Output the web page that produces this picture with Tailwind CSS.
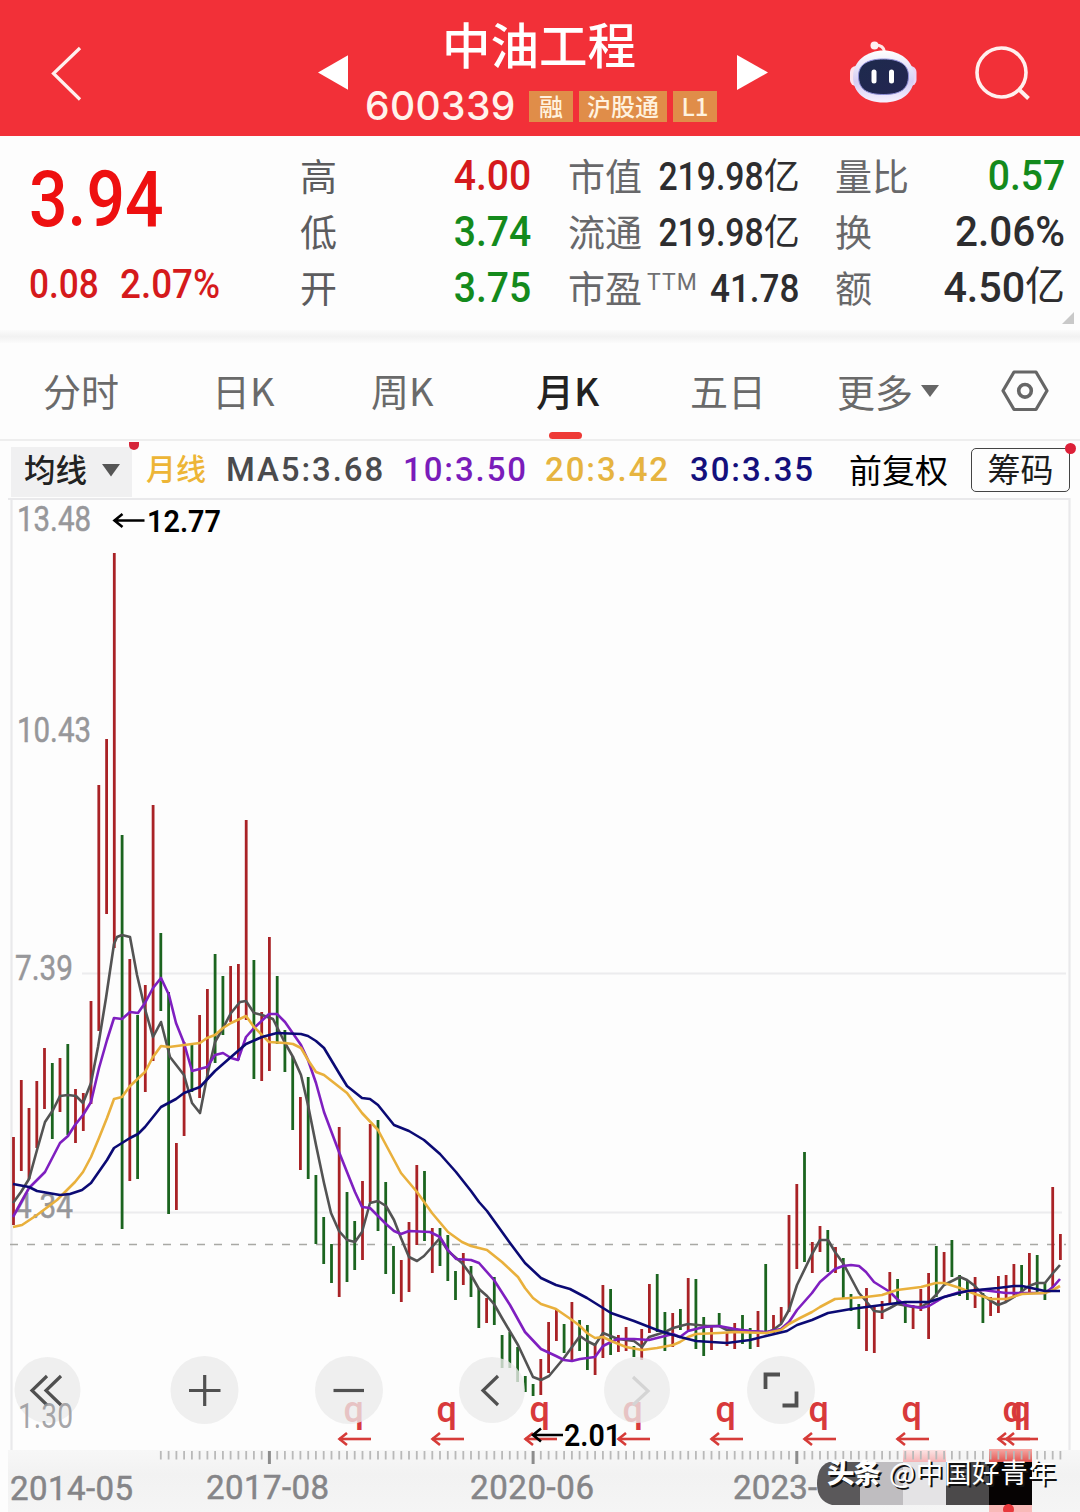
<!DOCTYPE html>
<html lang="zh-CN">
<head>
<meta charset="utf-8">
<title>中油工程 600339</title>
<script src="https://cdn.jsdelivr.net/npm/@tailwindcss/browser@4"></script>
</head>
<body class="w-[1080px] h-[1512px] overflow-hidden bg-[#fdfdfd] font-[Roboto,'Noto_Sans_CJK_SC',sans-serif]">

<!-- Title bar -->
<header class="flex h-[136px] bg-[#f23038] text-white">
  <svg class="w-[318px] h-[136px] shrink-0" viewBox="0 0 318 136" fill="none" stroke="#fff0ee" stroke-width="3.2"><path d="M80 48 53.500 73.500 80 99.500"/></svg>
  <svg class="w-[30px] h-[136px] shrink-0" viewBox="0 0 30 136" fill="#fff"><path d="M0 72.500 30.500 55v35z"/></svg>
  <div class="w-[389px] shrink-0 flex flex-col">
    <div class="h-[86px] pt-[9px] pl-[94px] leading-[68px] text-[48.500px] font-medium whitespace-nowrap font-['Noto_Sans_CJK_SC',sans-serif]">中油工程</div>
    <div class="flex items-center h-[40px] pl-[17px] text-[#fff3ec]">
      <span class="w-[164px] text-[39px] leading-[40px] font-[Inter,sans-serif] font-medium tracking-[0.400px]">600339</span>
      <span class="flex gap-[6px] font-['Noto_Sans_CJK_SC',sans-serif] font-medium text-[24px] leading-[29px] text-[#fff2df]">
        <span class="w-[44px] h-[31px] bg-[#e08d49] text-center">融</span>
        <span class="w-[88px] h-[31px] bg-[#e08d49] text-center">沪股通</span>
        <span class="w-[44px] h-[31px] bg-[#e08d49] text-center">L1</span>
      </span>
    </div>
  </div>
  <svg class="w-[31px] h-[136px] shrink-0" viewBox="0 0 31 136" fill="#fff"><path d="M0 55 31 72.500 0 90z"/></svg>
  <svg class="w-[312px] h-[136px] shrink-0" viewBox="768 0 312 136" fill="none">
    <defs>
      <linearGradient id="head" x1="0" y1="0" x2="0" y2="1"><stop offset="0" stop-color="#fff"/><stop offset=".6" stop-color="#d6cdf3"/><stop offset="1" stop-color="#f7f1ff"/></linearGradient>
      <linearGradient id="face" x1="0" y1="0" x2="1" y2="1"><stop offset="0" stop-color="#1d2a4c"/><stop offset="1" stop-color="#242552"/></linearGradient>
    </defs>
    <path d="M875 45c6 0 9 2 9.500 7" stroke="#ffe6e6" stroke-width="3"/>
    <circle cx="874.500" cy="45.500" r="4" fill="#fff0f2"/>
    <rect x="850" y="66" width="12" height="20" rx="6" fill="#fbe4ee"/><rect x="904.500" y="66" width="12" height="20" rx="6" fill="#e9d4f4"/>
    <path d="M883.500 50.500C900 50.500 914 61 914 77c0 16-12 25.500-30.500 25.500S853 93 853 77c0-16 14-26.500 30.500-26.500z" fill="url(#head)"/>
    <path d="M883.500 59c15 0 25 5 25 17 0 13-8 18.500-25 18.500s-25-5.500-25-18.500c0-12 10-17 25-17z" fill="url(#face)" stroke="#8f8fd8" stroke-width="1"/>
    <rect x="871.500" y="69.500" width="5" height="14" rx="2.500" fill="#fff"/><rect x="889" y="69.500" width="5" height="14" rx="2.500" fill="#fff"/>
    <circle cx="1001.500" cy="72.500" r="24.500" stroke="#fff0ee" stroke-width="3.600"/><path d="M1018.500 89 1028.500 98.500" stroke="#fff0ee" stroke-width="4"/>
  </svg>
</header>

<!-- Quote summary -->
<section class="relative flex h-[194px] pt-[11px] text-[43px] leading-[56px] font-medium text-[#2d2d2f] whitespace-nowrap">
  <div class="w-[300px] pl-[29px] shrink-0 text-[#d51a1c]">
    <div class="pt-[1px] h-[110px] leading-[104px] text-[78px] text-[#ee1010] origin-left scale-x-[.87]">3.94</div>
    <div class="flex text-[40px] leading-[56px]"><span class="w-[91px] origin-left scale-x-[.88]">0.08</span><span class="origin-left scale-x-[.92]">2.07%</span></div>
  </div>
  <div class="w-[231px] shrink-0">
    <div class="h-[56px] flex justify-between"><span class="pt-[4px] text-[37px] font-normal text-[#5c5c5e]">高</span><span class="origin-right scale-x-[.91] text-[#d51a1c]">4.00</span></div>
    <div class="h-[56px] flex justify-between"><span class="pt-[4px] text-[37px] font-normal text-[#5c5c5e]">低</span><span class="origin-right scale-x-[.91] text-[#148a1c]">3.74</span></div>
    <div class="h-[56px] flex justify-between"><span class="pt-[4px] text-[37px] font-normal text-[#5c5c5e]">开</span><span class="origin-right scale-x-[.91] text-[#148a1c]">3.75</span></div>
  </div>
  <div class="w-[231px] ml-[37px] shrink-0 text-[39px]">
    <div class="h-[56px] flex"><span class="w-[74px] pt-[4px] text-[37px] font-normal text-[#68686a]">市值</span><span class="flex-1 flex justify-end pt-[2px]"><span class="origin-right scale-x-[.865]">219.98</span><span class="text-[36px] font-normal">亿</span></span></div>
    <div class="h-[56px] flex"><span class="w-[74px] pt-[4px] text-[37px] font-normal text-[#68686a]">流通</span><span class="flex-1 flex justify-end pt-[2px]"><span class="origin-right scale-x-[.865]">219.98</span><span class="text-[36px] font-normal">亿</span></span></div>
    <div class="h-[56px] flex"><span class="w-[79px] pt-[4px] text-[37px] font-normal text-[#68686a]">市盈</span><span class="w-[52px] pt-[2px] text-[23px] leading-[44px] font-normal text-[#707072] tracking-[1px]">TTM</span><span class="flex-1 flex justify-end pt-[2px]"><span class="origin-right scale-x-[.9]">41.78</span></span></div>
  </div>
  <div class="w-[230px] ml-[36px] shrink-0">
    <div class="h-[56px] flex justify-between"><span class="pt-[4px] text-[37px] font-normal text-[#68686a]">量比</span><span class="origin-right scale-x-[.91] text-[#148a1c]">0.57</span></div>
    <div class="h-[56px] flex justify-between"><span class="pt-[4px] text-[37px] font-normal text-[#68686a]">换</span><span class="origin-right scale-x-[.94]">2.06%</span></div>
    <div class="h-[56px] flex"><span class="pt-[4px] text-[37px] font-normal text-[#68686a]">额</span><span class="flex-1 flex justify-end"><span class="origin-right scale-x-[.96]">4.50</span><span class="text-[40px] font-normal">亿</span></span></div>
  </div>
  <svg class="absolute right-[6px] bottom-[6px] w-[12px] h-[12px]" viewBox="0 0 12 12"><path d="M12 0v12H0z" fill="#c9c9c9"/></svg>
</section>
<div class="h-[13px] bg-linear-to-b from-[#fbfbfb] via-[#f2f2f2] to-[#fbfbfb]"></div>

<!-- Period tabs -->
<nav class="flex h-[98px] pl-[43px] border-b-2 border-[#eeeeee] text-[38px] leading-[94px] text-[#6a6a6a] font-['Noto_Sans_CJK_SC',sans-serif] font-normal whitespace-nowrap">
  <span class="w-[169px]">分时</span>
  <span class="w-[159px]">日K</span>
  <span class="w-[165px]">周K</span>
  <span class="w-[154px] flex flex-col font-medium text-[#222]"><span class="h-[89px]">月K</span><span class="ml-[13px] w-[33px] h-[8px] rounded-full bg-[#ee3a36]"></span></span>
  <span class="w-[147px]">五日</span>
  <span class="w-[164px] flex items-center"><span class="w-[84px]">更多</span><svg class="w-[18px] h-[96px]" viewBox="0 0 18 96"><path d="M0 42h18l-9 12z" fill="#666"/></svg></span>
  <svg class="w-[48px] h-[96px]" viewBox="0 0 48 96" fill="none" stroke="#666" stroke-width="3.200"><path d="M13 29h22l11 18.800L35 66.500H13L2 47.800z" stroke-linejoin="round"/><circle cx="24" cy="47.800" r="6.300" stroke-width="3.600"/></svg>
</nav>

<!-- Moving average legend -->
<section class="relative flex h-[57px] pl-[11px] text-[33px] leading-[58px] font-medium tracking-[1.900px] whitespace-nowrap">
  <div class="flex w-[121px] mt-[6px] h-[50px] pl-[13px] bg-[#f0f0f1] leading-[50px] tracking-normal text-[31.500px] text-[#222] font-medium"><span class="w-[78px]">均线</span><svg class="w-[18px] h-[48px]" viewBox="0 0 18 48"><path d="M0 17h18l-9 12.500z" fill="#555"/></svg></div>
  <span class="ml-[14px] w-[80px] text-[30px] tracking-normal text-[#edb536] font-medium">月线</span>
  <span class="w-[177px] text-[#4b4b4d]">MA5:3.68</span>
  <span class="w-[142px] text-[#7a1cba]">10:3.50</span>
  <span class="w-[145px] text-[#e6b440]">20:3.42</span>
  <span class="w-[159px] text-[#14107c]">30:3.35</span>
  <span class="w-[122px] pt-[2px] tracking-normal font-normal text-black">前复权</span>
  <span class="mt-[7px] w-[99px] h-[44px] rounded-[5px] border-[1.500px] border-[#444] text-center leading-[43px] tracking-normal font-normal text-[#1c1c1c]">筹码</span>
  <span class="absolute left-[129px] top-px w-[10px] h-[8px] rounded-b-full bg-[#d6263a]"></span>
  <span class="absolute left-[1065px] top-[2px] w-[11px] h-[11px] rounded-full bg-[#dc2038]"></span>
</section>

<!-- Monthly price chart -->
<svg class="block w-[1080px] h-[1014px]" viewBox="0 498 1080 1014" font-family="Roboto, 'Noto Sans CJK SC', sans-serif">
  <defs>
    <linearGradient id="axis" x1="0" y1="0" x2="0" y2="1"><stop offset="0" stop-color="#f7f7f7"/><stop offset=".4" stop-color="#f2f2f2"/><stop offset="1" stop-color="#f5f5f5"/></linearGradient>
    <linearGradient id="pink" x1="0" y1="0" x2="0" y2="1"><stop offset="0" stop-color="#fde4e4"/><stop offset="1" stop-color="#f5b3b5"/></linearGradient>
    <linearGradient id="red" x1="0" y1="0" x2="0" y2="1"><stop offset="0" stop-color="#f6a9a5"/><stop offset="1" stop-color="#e25450"/></linearGradient>
    <g id="mark" fill="none" stroke="#d63b38"><path d="M1 1439H33" stroke-width="2.600"/><path d="M9 1433 1.500 1439 9 1445" stroke-width="2.600"/><text x="5.500" y="1421.500" font-size="36" font-weight="500" stroke="none" fill="#d8393b">q</text></g>
  </defs>
  <path d="M8 1450H1080V1512H8z" fill="url(#axis)"/>
  <g fill="none" stroke="#e9e9eb" stroke-width="2.200"><path d="M8 499H1069.500V1450M11.500 499V1450"/><path d="M82 973.500H1066M72 1212.500H1062" stroke="#ececee"/></g>
  <path d="M10 1244.500H1066" stroke="#a9a9a5" stroke-width="1.400" stroke-dasharray="8 9"/>
  <g fill="#97979a" font-size="35" stroke="#97979a" stroke-width=".5">
    <text x="17" y="530.500" textLength="74" lengthAdjust="spacingAndGlyphs">13.48</text>
    <text x="17" y="741.500" textLength="74" lengthAdjust="spacingAndGlyphs">10.43</text>
    <text x="15" y="980" textLength="58" lengthAdjust="spacingAndGlyphs">7.39</text>
    <text x="15" y="1218" textLength="58" lengthAdjust="spacingAndGlyphs">4.34</text>
  </g>
  <g id="candles" fill="none" stroke-width="2.800"></g>
  <g fill="none" stroke-width="2.600" stroke-linejoin="round">
    <polyline stroke="#535353" points="13,1203 21,1192 29,1179 37,1150 45,1122 53,1110 60,1096 68,1095 76,1096 83,1103 91,1083 98,1047 106,998 114,944 117,937 122,935 130,937 137,975 145,1009 153,1037 161,1022 170,1057 184,1075 192,1103 200,1113 208,1072 215,1042 223,1028 231,1013 240,1002 246,1001 254,1013 262,1015 273,1019 285,1043 293,1057 301,1075 308,1105 316,1145 324,1183 331,1213 339,1231 347,1240 355,1242 362,1232 370,1203 378,1201 386,1206 394,1220 401,1238 409,1257 417,1261 424,1256 440,1238 448,1251 462,1263 471,1275 479,1289 487,1296 494,1304 502,1318 518,1345 533,1377 541,1380 549,1376 564,1358 580,1336 587,1341 595,1345 603,1333 618,1339 634,1341 642,1347 649,1337 665,1332 673,1328 688,1324 707,1326 719,1326 727,1330 750,1331 766,1333 773,1330 781,1324 789,1310 797,1285 812,1254 820,1240 828,1240 835,1252 843,1263 851,1278 859,1293 866,1301 874,1311 882,1312 890,1308 897,1304 913,1307 921,1307 929,1302 936,1295 944,1285 960,1277 967,1280 975,1286 983,1295 991,1301 998,1305 1006,1302 1014,1297 1029,1286 1037,1283 1045,1283 1053,1273 1060,1265"/>
    <polyline stroke="#7f1fc0" points="13,1217 29,1188 45,1172 60,1143 68,1136 75,1125 83,1115 91,1102 99,1068 107,1040 114,1018 122,1019 130,1012 138,1013 145,1003 153,988 161,978 169,995 176,1023 184,1043 192,1071 207,1067 215,1055 223,1053 231,1058 238,1060 246,1037 254,1028 269,1014 277,1014 285,1022 301,1045 308,1060 316,1083 324,1112 339,1152 355,1192 362,1207 370,1208 386,1224 394,1231 401,1234 409,1231 430,1232 440,1237 448,1250 456,1259 471,1260 479,1263 494,1280 510,1305 525,1332 541,1349 556,1356 564,1360 572,1361 580,1359 595,1357 603,1346 611,1342 618,1339 634,1339 649,1340 665,1336 673,1334 680,1337 688,1331 704,1327 719,1326 735,1329 750,1331 766,1332 781,1329 789,1322 797,1310 812,1293 820,1282 835,1269 843,1266 851,1265 859,1266 866,1272 874,1282 882,1287 890,1292 897,1299 905,1305 921,1308 929,1306 944,1297 960,1292 983,1290 1006,1293 1022,1293 1045,1293 1053,1287 1060,1279"/>
    <polyline stroke="#e9b03c" points="13,1227 22,1225 37,1215 57,1200 75,1182 83,1172 91,1157 99,1138 107,1118 114,1099 122,1097 130,1086 145,1072 153,1057 161,1046 169,1047 192,1044 200,1043 207,1038 215,1035 223,1028 231,1023 246,1016 254,1027 269,1042 285,1043 293,1044 301,1048 308,1060 316,1072 324,1075 347,1093 362,1113 378,1130 386,1145 401,1173 417,1192 432,1213 448,1232 462,1242 471,1246 487,1250 502,1262 518,1277 525,1288 533,1298 541,1304 556,1309 572,1320 580,1326 587,1333 595,1338 603,1337 611,1341 626,1347 642,1350 657,1348 673,1345 680,1342 688,1337 696,1334 719,1333 735,1332 766,1333 781,1330 789,1324 800,1318 812,1312 820,1307 835,1299 866,1297 882,1295 897,1290 921,1287 936,1283 944,1283 960,1288 975,1294 991,1299 1006,1299 1022,1294 1045,1293 1053,1290 1060,1286"/>
    <polyline stroke="#0b0a74" points="13,1184 29,1187 37,1191 60,1195 70,1194 82,1190 91,1183 107,1160 114,1148 130,1138 138,1134 145,1127 161,1107 176,1099 184,1093 200,1087 215,1071 231,1057 246,1044 262,1037 277,1033 301,1034 308,1036 316,1041 324,1048 339,1073 347,1086 362,1098 370,1099 378,1105 394,1125 409,1131 424,1140 440,1154 456,1172 471,1191 479,1202 487,1211 510,1243 525,1263 541,1278 556,1285 570,1289 587,1298 611,1313 634,1321 657,1330 680,1337 696,1341 727,1343 750,1340 766,1336 787,1331 797,1325 812,1320 828,1313 851,1309 882,1305 905,1302 929,1302 944,1297 967,1291 998,1288 1014,1286 1022,1286 1045,1291 1060,1291"/>
  </g>
  <!-- Ex-rights marks -->
  <use href="#mark" x="338"/><use href="#mark" x="431"/><use href="#mark" x="524"/><use href="#mark" x="617"/><use href="#mark" x="710"/><use href="#mark" x="803"/><use href="#mark" x="896"/><use href="#mark" x="997"/><use href="#mark" x="1005"/>
  <!-- Chart controls -->
  <g fill="#ebebeb" fill-opacity=".78"><circle cx="47.500" cy="1390" r="33"/><circle cx="204.500" cy="1390" r="34"/><circle cx="349" cy="1390" r="34"/><circle cx="492" cy="1390" r="33"/><circle cx="637" cy="1390" r="33"/><circle cx="781" cy="1390" r="34"/></g>
  <g fill="none" stroke="#505050" stroke-width="3.200">
    <path d="M47 1376 32 1390.500 47 1405M61 1376 46 1390.500 61 1405"/>
    <path d="M189 1390.500H220.500M204.700 1375V1406"/>
    <path d="M333.500 1390.500H364"/>
    <path d="M498 1376 483 1390.500 498 1405"/>
    <path d="M633 1377 648 1391 633 1405" stroke="#d4d4d4"/>
    <path d="M765.500 1389V1374.500H780M782.500 1405.500H796.500V1391.500" stroke-width="3.800"/>
  </g>
  <text x="18" y="1428" font-size="35" fill="#97979a" fill-opacity=".85" textLength="55" lengthAdjust="spacingAndGlyphs">1.30</text>
  <!-- Extremes -->
  <g fill="none" stroke="#000" stroke-width="2.600"><path d="M114.500 520.500H144.500M122.500 514 114.500 520.500 122.500 527"/><path d="M533 1435H563M541 1428.500 533 1435 541 1441.500"/></g>
  <g font-size="32" font-weight="600"><text x="147" y="532" textLength="74" lengthAdjust="spacingAndGlyphs">12.77</text><text x="564" y="1446" textLength="57" lengthAdjust="spacingAndGlyphs">2.01</text></g>
  <!-- Time axis -->
  <path d="M903 1450h43v12h-43z" fill="url(#pink)"/><path d="M989 1449h43v13h-43z" fill="url(#red)"/>
  <g id="ticks" fill="none"></g>
  <g fill="#858588" font-size="33" stroke="#858588" stroke-width=".5">
    <text x="10" y="1500" textLength="123" lengthAdjust="spacing">2014-05</text>
    <text x="206" y="1499" textLength="123" lengthAdjust="spacing">2017-08</text>
    <text x="470" y="1499" textLength="124" lengthAdjust="spacing">2020-06</text>
    <text x="733" y="1499" textLength="84" lengthAdjust="spacing">2023-</text>
  </g>
  <!-- Author signature -->
  <path d="M860 1462v43h-28q-15-4-15-21 0-18 12-22z" fill="#5a585a"/>
  <path d="M860 1462h43v43h-43z" fill="#bfbdc0"/><path d="M903 1462h43v43h-43z" fill="#e4e3e5"/><path d="M946 1462h43v43h-43z" fill="#4b494a"/><path d="M989 1462h43v43h-43z" fill="#060303"/>
  <path d="M989 1505h43v7h-43z" fill="#f8b9b8"/><circle cx="1008.500" cy="1509.500" r="5.500" fill="#e8383c"/>
  <g font-family="'Noto Sans CJK SC', sans-serif" font-size="27.500">
    <g fill="#111" transform="translate(2 2)"><text x="827" y="1483" font-weight="900" textLength="54">头条</text><text x="889" y="1483" font-weight="400" textLength="167">@中国好青年</text></g>
    <g fill="#fff"><text x="827" y="1483" font-weight="900" textLength="54">头条</text><text x="889" y="1483" font-weight="400" textLength="167">@中国好青年</text></g>
  </g>
</svg>

<script>
// Each month: direction (R up, G down), high y, low y
const months = `R1137-1225 R1080-1171 R1108-1179 R1081-1148 R1048-1109 G1063-1139 R1058-1112 G1044-1135 R1089-1143 R1093-1131
R1001-1104 R785-1031 R739-914 R553-948 G835-1229 R959-1181 G1015-1179 R985-1092 R805-1061 G933-1011
G992-1214 R1143-1210 R1042-1136 G1045-1092 R1015-1098 R989-1080 G954-1063 G976-1035 R966-1022 R964-1060
R820-1020 G960-1079 R1012-1081 R937-1071 G976-1044 G1030-1072 G1056-1130 R1097-1170 G1077-1179 G1175-1244
G1217-1264 G1244-1283 R1127-1297 G1192-1282 G1221-1270 R1181-1260 R1124-1202 G1120-1231 G1182-1274 G1246-1294
R1260-1302 R1222-1292 R1165-1245 G1171-1241 R1228-1273 G1228-1266 G1235-1281 G1271-1300 R1253-1285 G1266-1297
G1288-1328 R1298-1323 G1277-1325 G1335-1368 G1332-1368 G1347-1382 G1376-1392 G1384-1396 R1359-1395 R1322-1373
R1309-1341 G1324-1353 R1302-1360 G1320-1351 G1325-1370 R1343-1375 R1285-1358 G1289-1355 R1335-1352 R1327-1351
G1346-1357 R1329-1360 R1284-1333 G1274-1332 G1312-1351 R1313-1347 G1309-1330 R1278-1330 G1279-1349 G1317-1356
R1327-1350 G1313-1327 R1332-1346 R1323-1349 G1315-1344 G1328-1349 R1311-1347 G1264-1333 R1315-1333 R1307-1323
R1215-1312 R1184-1269 G1152-1262 R1242-1273 R1226-1252 G1230-1272 R1247-1273 G1258-1299 G1294-1311 G1304-1329
R1288-1351 R1305-1353 R1301-1319 R1272-1303 G1279-1303 G1302-1323 R1305-1329 R1289-1311 R1273-1339 G1246-1297
R1252-1282 G1240-1277 G1275-1296 G1280-1300 R1277-1308 G1293-1323 R1297-1316 R1276-1313 R1275-1302 R1264-1297
G1265-1292 R1253-1293 G1255-1293 G1283-1300 R1187-1287 R1234-1260`.split(/\s+/);
const NS = 'http://www.w3.org/2000/svg';
function line(parent, d, stroke, width) {
  const p = document.createElementNS(NS, 'path');
  p.setAttribute('d', d);
  p.setAttribute('stroke', stroke);
  if (width) p.setAttribute('stroke-width', width);
  parent.appendChild(p);
}
const candles = document.getElementById('candles');
months.forEach((m, i) => {
  const [hi, lo] = m.slice(1).split('-');
  const x = (13.5 + i * 7.755).toFixed(1);
  line(candles, `M${x} ${hi}V${lo}`, m[0] === 'R' ? '#a92226' : '#1b641f');
});
const ticks = document.getElementById('ticks');
for (let i = 19; i < 136; i++) {
  const x = (13.5 + i * 7.755).toFixed(1);
  const major = i === 33 || i === 67 || i === 101;
  line(ticks, `M${x} 1451V${major ? 1464 : 1459.5}`, major ? '#8c8c8c' : '#b9b9b9', major ? 3 : 1.8);
}
</script>
</body>
</html>
